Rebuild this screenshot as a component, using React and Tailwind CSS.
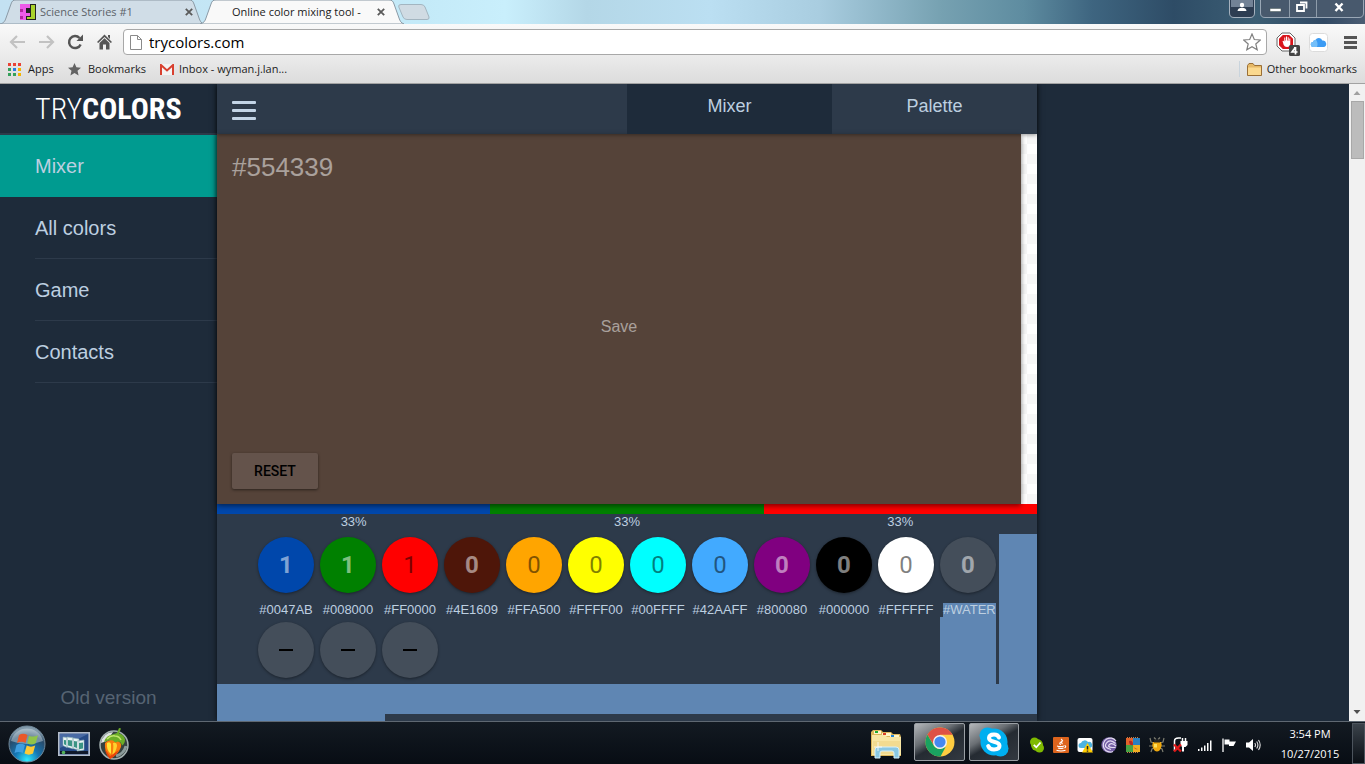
import React, { useState } from 'react';

const colors = [
  { hex: '#0047AB', parts: 1, circle: 'bg-[#0047ab] text-white/50 font-bold' },
  { hex: '#008000', parts: 1, circle: 'bg-[#008000] text-white/50 font-bold' },
  { hex: '#FF0000', parts: 1, circle: 'bg-[#ff0000] text-black/50 font-normal' },
  { hex: '#4E1609', parts: 0, circle: 'bg-[#4e1609] text-white/50 font-bold' },
  { hex: '#FFA500', parts: 0, circle: 'bg-[#ffa500] text-black/50 font-normal' },
  { hex: '#FFFF00', parts: 0, circle: 'bg-[#ffff00] text-black/50 font-normal' },
  { hex: '#00FFFF', parts: 0, circle: 'bg-[#00ffff] text-black/50 font-normal' },
  { hex: '#42AAFF', parts: 0, circle: 'bg-[#42aaff] text-black/50 font-normal' },
  { hex: '#800080', parts: 0, circle: 'bg-[#800080] text-white/50 font-bold' },
  { hex: '#000000', parts: 0, circle: 'bg-black text-white/50 font-bold' },
  { hex: '#FFFFFF', parts: 0, circle: 'bg-white text-black/50 font-normal' },
  { hex: '#WATER', parts: 0, circle: 'bg-[#444e5a] text-white/50 font-bold' },
];

const menu = ['Mixer', 'All colors', 'Game', 'Contacts'];

const CloseX = () => (
  <svg className="w-2 h-2" viewBox="0 0 8 8" stroke="#5a5a5a" strokeWidth="1.8">
    <path d="M.8.8l6.4 6.4M7.2.8L.8 7.2" />
  </svg>
);

const TabShape = ({ fill }) => (
  <svg className="absolute inset-0 w-full h-full" viewBox="0 0 204 24" preserveAspectRatio="none">
    <path d="M0 24C4 23 5 21 6 18L11 4C12 1 13 0 16 0H189C192 0 193 1 194 4L199 18C200 21 201 23 204 24Z" fill={fill} stroke="#8b9aa6" />
  </svg>
);

const TabStrip = () => (
  <div className="relative h-6 shrink-0 flex items-start overflow-hidden bg-[linear-gradient(90deg,#c3e1f2_0%,#c4eaf8_31%,#c9effc_37%,#b4d7e7_43%,#bbdff2_52%,#a9cde0_60%,#76a1b1_69%,#5e8ca0_75%,#3e6580_80%,#2e4c66_86%,#3c5e74_92%,#314964_97%,#4c5d73_100%)]">
    <div className="relative w-[204px] h-6 shrink-0">
      <TabShape fill="#d0dde7" />
      <div className="relative flex items-center h-6 pl-5 pr-[11px] text-[11px] text-[#5c6369]">
        <svg className="w-4 h-4 mr-1" viewBox="0 0 16 16">
          <path fill="#222" d="M0 0h16v16H0z" />
          <path fill="#ee5be8" d="M0 0h10v4H6v5h4v3H6v4H0z" />
          <path fill="#b4249f" d="M0 5h3v3H0zM0 12h3v3H0z" />
          <path fill="#a9d32c" d="M11 1h4v14H7v-2h4z" />
          <path fill="#222" d="M7 5h3v3H7z" />
        </svg>
        <span>Science Stories #1</span>
        <button className="ml-auto" aria-label="Close tab"><CloseX /></button>
      </div>
    </div>
    <div className="relative w-[204px] h-6 -ml-1 shrink-0">
      <TabShape fill="#f9f9f9" />
      <div className="relative flex items-center h-6 pl-8 pr-[19px] text-[11px] text-[#1b1b1b]">
        <span className="whitespace-nowrap">Online color mixing tool -</span>
        <button className="ml-auto" aria-label="Close tab"><CloseX /></button>
      </div>
    </div>
    <button className="-ml-1.5 mt-1" aria-label="New tab">
      <svg className="w-8 h-4" viewBox="0 0 32 16">
        <path d="M3 .5H23Q26 .5 27 3L31 13Q31.500 15.500 29 15.500H9Q6 15.500 5 13L.8 3Q0 .5 3 .5Z" fill="#d0dbe3" stroke="#a3b5c0" />
      </svg>
    </button>
    <div className="ml-auto flex items-start gap-[5px]">
      <button aria-label="Profile">
        <svg className="w-[26px] h-[18px]" viewBox="0 0 26 18">
          <path d="M.5 0V13Q.5 17.500 5 17.500H21Q25.500 17.500 25.500 13V0" fill="#2d3d52" stroke="#a5b1be" />
          <path d="M2 0H24V7H2Z" fill="#8394a7" opacity=".8" />
          <circle cx="13" cy="5" r="2.200" fill="#fff" />
          <path d="M8.500 11Q9 7.700 13 7.700T17.500 11Z" fill="#fff" />
        </svg>
      </button>
      <svg className="w-[104px] h-[18px] mr-px" viewBox="0 0 104 18" role="img" aria-label="Window controls">
        <path d="M.5 0V13Q.5 17.500 5 17.500H99Q103.500 17.500 103.500 13V0" fill="#48596d" stroke="#9aa7b6" />
        <path d="M29.500 0V17M56.500 0V17" stroke="#8e9caa" />
        <path d="M10 8.500h11v3H10z" fill="#fff" stroke="#455" strokeWidth=".5" />
        <path d="M37 5h7v6h-7zM40 2.500h6.500v6" fill="none" stroke="#fff" strokeWidth="1.800" />
        <path d="M75.500 3.500l7 7.500M82.500 3.500l-7 7.500" stroke="#fff" strokeWidth="2.400" />
      </svg>
    </div>
  </div>
);

const Toolbar = () => (
  <div className="h-8 shrink-0 flex items-center pl-[9px] pr-2 pt-1 bg-linear-to-b from-[#f9f9f9] to-[#ebebeb]">
    <div className="flex gap-3">
      <button aria-label="Back">
        <svg className="w-[17px] h-4" viewBox="0 0 17 16" fill="none" stroke="#c2c2c2" strokeWidth="2.200"><path d="M16 8H2.500M8 2L2 8l6 6" /></svg>
      </button>
      <button aria-label="Forward">
        <svg className="w-[17px] h-4" viewBox="0 0 17 16" fill="none" stroke="#c2c2c2" strokeWidth="2.200"><path d="M1 8h13.500M9 2l6 6-6 6" /></svg>
      </button>
      <button aria-label="Reload">
        <svg className="w-[17px] h-4" viewBox="0 0 17 16">
          <path d="M13.600 10.500A6 6 0 1 1 12.500 4" fill="none" stroke="#555" strokeWidth="2.500" />
          <path d="M16 .5V7H9.500Z" fill="#555" />
        </svg>
      </button>
      <button aria-label="Home">
        <svg className="w-[17px] h-4" viewBox="0 0 17 16" fill="#555">
          <path d="M8.500.5L16 8l-1.200 1L8.500 3 2.200 9 1 8z" />
          <path d="M3.500 9l5-4.700 5 4.700v6.500H10v-5H7v5H3.500zM12 1h2v4l-2-2z" />
        </svg>
      </button>
    </div>
    <div className="ml-[10px] flex-1 flex items-center h-[26px] px-[5px] bg-white border border-[#a8a8a8] rounded-sm">
      <svg className="w-3 h-[15px] ml-px mr-[7px]" viewBox="0 0 12 15" fill="#fff" stroke="#8a8a8a">
        <path d="M.5.5h7l4 4v10H.5zM7.500.5v4h4" />
      </svg>
      <input aria-label="Address" className="flex-1 min-w-0 text-[15px] text-black outline-none" defaultValue="trycolors.com" />
      <button aria-label="Bookmark this page">
        <svg className="w-[18px] h-[18px]" viewBox="0 0 18 18" fill="#fff" stroke="#808080" strokeWidth="1.200">
          <path d="M9 1l2.300 5.500 6 .500-4.500 4 1.400 5.800L9 13.700l-5.200 3.100L5.200 11 .700 7l6-.500z" />
        </svg>
      </button>
    </div>
    <button className="ml-[9px]" aria-label="AdBlock">
      <svg className="w-6 h-6 mt-1" viewBox="0 0 24 24">
        <path d="M6 1h8l5 5v8l-5 5H6l-5-5V6z" fill="#fff" stroke="#666" />
        <path d="M6.800 3h6.400L17 6.800v6.400L13.200 17H6.800L3 13.200V6.800z" fill="#d9151b" />
        <path d="M6.500 9l1-.3.800 1V5.500h1v3h.700V4.500h1v4h.700V5.300h1V9h.600V6.500h1V12q0 3-3.300 3-2.500 0-3.300-2z" fill="#fff" />
        <rect x="13" y="13" width="11" height="11" rx="1.500" fill="#444" />
        <path d="M19.300 15.500l-3.300 4.500h5.500M19.500 15v7.500" fill="none" stroke="#fff" strokeWidth="1.700" />
      </svg>
    </button>
    <button className="ml-[9px]" aria-label="iCloud">
      <svg className="w-[19px] h-[19px]" viewBox="0 0 19 19">
        <rect x=".5" y=".5" width="18" height="18" rx="3" fill="#fff" stroke="#dcdcdc" />
        <path d="M4.500 14a2.500 2.500 0 0 1-.500-5A2.800 2.800 0 0 1 6.500 7 3.700 3.700 0 0 1 13.300 7.500 3.200 3.200 0 0 1 14.500 14z" fill="#3b9bf4" />
        <path d="M4.500 14a2.500 2.500 0 0 1-.500-5A2.800 2.800 0 0 1 7 6.800Q9.500 10 8 14z" fill="#74bff9" />
      </svg>
    </button>
    <button className="ml-4" aria-label="Chrome menu">
      <svg className="w-[13px] h-[13px]" viewBox="0 0 13 13" fill="#555"><path d="M0 0h13v3H0zM0 5h13v3H0zM0 10h13v3H0z" /></svg>
    </button>
  </div>
);

const BookmarksBar = () => (
  <nav className="h-7 shrink-0 flex items-center px-2 pb-px border-b border-[#a2a2a2] bg-linear-to-b from-[#ebebeb] to-[#dcdcdc] text-[11px] text-[#1c1c1c] whitespace-nowrap">
    <a href="#apps" className="flex items-center gap-[7px] w-[60px]">
      <svg className="w-[13px] h-[13px]" viewBox="0 0 13 13">
        <path fill="#ea4335" d="M0 0h3v3H0zM5 0h3v3H5zM10 0h3v3h-3z" />
        <path fill="#34a05a" d="M0 5h3v3H0zM0 10h3v3H0z" />
        <path fill="#2a7de1" d="M5 5h3v3H5z" />
        <path fill="#34a05a" d="M5 10h3v3H5z" />
        <path fill="#f4b400" d="M10 5h3v3h-3zM10 10h3v3h-3z" />
      </svg>
      Apps
    </a>
    <a href="#bookmarks" className="flex items-center gap-[7px] w-[92px]">
      <svg className="w-[13px] h-[13px]" viewBox="0 0 13 13" fill="#636363">
        <path d="M6.500 0l1.900 4.300 4.600.400-3.500 3.100 1.100 4.700-4.100-2.500-4.100 2.500 1.100-4.700L0 4.700l4.600-.400z" />
      </svg>
      Bookmarks
    </a>
    <a href="#inbox" className="flex items-center gap-[5px]">
      <svg className="w-[14px] h-[11px]" viewBox="0 0 14 11">
        <path fill="#f3f3f3" d="M1 0h12v11H1z" />
        <path d="M1 11V1l6 5.500L13 1v10" fill="none" stroke="#d8402f" strokeWidth="2" />
      </svg>
      Inbox - wyman.j.lan...
    </a>
    <a href="#other" className="ml-auto flex items-center gap-[5px] pl-[7px] border-l border-[#c9d4dd]">
      <svg className="w-[15px] h-[13px]" viewBox="0 0 15 13">
        <path d="M.5 12.500v-10L2 .5h4L7.500 2.500h7v10z" fill="#e5b867" stroke="#9a6f36" />
        <path d="M1 4.500h13v7.500H1z" fill="#fbd98f" />
      </svg>
      Other bookmarks
    </a>
  </nav>
);

const Sidebar = () => (
  <aside className="w-[217px] shrink-0 flex flex-col text-[#bdcfe0]">
    <div className="h-[51px] shrink-0 flex items-center pl-[35px] border-b-2 border-[#2d3a4a]">
      <h1 className="font-['Roboto_Condensed','Liberation_Sans_Narrow','Roboto',sans-serif] text-[30px] leading-8 text-white">
        <span className="font-light">TRY</span><span className="font-bold">COLORS</span>
      </h1>
    </div>
    <nav className="text-xl">
      {menu.map((item, i) => (
        <a
          key={item}
          href={`#${item}`}
          className={i === 0 ? 'flex items-center h-[62px] pl-[35px] bg-[#009b90]' : 'flex items-center h-[62px] ml-[35px] border-b border-[#2d3a4a]'}
        >
          {item}
        </a>
      ))}
    </nav>
    <a href="#old" className="mt-auto pb-[11px] text-center text-[19px] leading-6 text-[#566473]">Old version</a>
  </aside>
);

const Mixer = () => {
  const [tab, setTab] = useState('Mixer');

  return (
    <main className="relative flex-1 max-w-[820px] flex flex-col bg-[#2d3a4a] text-[#bdcfe0] shadow-[0_0_6px_rgba(0,0,0,0.7)]">
      <header className="relative z-20 h-[50px] shrink-0 flex items-stretch shadow-[0_1px_4px_rgba(0,0,0,0.4)]">
        <div className="w-1/2 flex items-center pl-[15px] pt-[3px]">
          <button aria-label="Menu">
            <svg className="w-6 h-[19px]" viewBox="0 0 24 19" fill="#c3d4e6">
              <rect width="24" height="3" rx="1" /><rect y="8" width="24" height="3" rx="1" /><rect y="16" width="24" height="3" rx="1" />
            </svg>
          </button>
        </div>
        {['Mixer', 'Palette'].map((name) => (
          <button
            key={name}
            onClick={() => setTab(name)}
            className={tab === name ? 'w-1/4 flex justify-center pt-3 text-lg leading-5 bg-[#1e2b3a]' : 'w-1/4 flex justify-center pt-3 text-lg leading-5'}
          >
            {name}
          </button>
        ))}
      </header>

      {/* Mixed color over the transparency checkerboard */}
      <section className="relative h-[370px] shrink-0 pr-4 bg-white bg-[repeating-conic-gradient(#f7f7f7_0_25%,#ffffff_0_50%)] bg-size-[20px_20px]">
        <div className="relative z-10 h-full flex flex-col items-start px-[15px] py-[15px] bg-[#554339] shadow-[0_2px_5px_rgba(0,0,0,0.5)]">
          <h2 className="mb-4 text-[26px] leading-9 text-white/50">#554339</h2>
          <button className="flex-1 self-stretch text-base text-white/50">Save</button>
          <button className="w-[86px] h-9 rounded-xs bg-[#64534b] font-['Roboto',sans-serif] text-sm font-medium text-black shadow-[0_1px_3px_rgba(0,0,0,0.5)]">RESET</button>
        </div>
      </section>

      <div className="h-[30px] shrink-0 grid grid-cols-3 text-center text-[13px] leading-4">
        <div><div className="h-[10px] bg-[#0047ab]" />33%</div>
        <div><div className="h-[10px] bg-[#008000]" />33%</div>
        <div><div className="h-[10px] bg-[#ff0000]" />33%</div>
      </div>

      <div className="h-[150px] shrink-0 flex">
        <ul className="flex gap-[6px] pl-[41px] pt-[3px] mr-[3px]">
          {colors.map((c) => (
            <li key={c.hex} className="w-14 flex flex-col">
              <button className={`w-14 h-14 shrink-0 rounded-full font-['Roboto',sans-serif] text-2xl shadow-[0_1px_3px_rgba(0,0,0,0.4)] ${c.circle}`}>
                {c.parts}
              </button>
              <span className={c.hex === '#WATER' ? 'mt-[10px] ml-[3px] text-[13px] leading-[14px] bg-[#5f86b3]' : 'mt-[10px] text-center text-[13px] leading-[14px]'}>
                {c.hex}
              </span>
              {c.parts > 0 && (
                <button aria-label={`Remove ${c.hex}`} className="mt-[5px] w-14 h-14 shrink-0 flex items-center justify-center rounded-full bg-[#444e5a] shadow-[0_1px_3px_rgba(0,0,0,0.4)]">
                  <span className="w-[14px] h-0.5 bg-black" />
                </button>
              )}
              {c.hex === '#WATER' && <div className="flex-1 bg-[#5f86b3]" />}
            </li>
          ))}
        </ul>
        <div className="flex-1 bg-[#5f86b3]" />
      </div>
      <div className="h-[30px] shrink-0 bg-[#5f86b3]" />
      <div className="flex-1 w-[168px] bg-[#5f86b3]" />
    </main>
  );
};

const Scrollbar = () => (
  <div className="w-4 shrink-0 ml-auto flex flex-col items-center bg-[#f1f1f1]">
    <svg className="w-4 h-[17px]" viewBox="0 0 16 17" fill="#a0a0a0"><path d="M4.500 11L8 7l3.500 4z" /></svg>
    <div className="w-[13px] h-[58px] bg-[#bcbcbc] border border-[#a8a8a8]" />
    <svg className="w-4 h-[17px] mt-auto" viewBox="0 0 16 17" fill="#505050"><path d="M4.500 6L8 10l3.500-4z" /></svg>
  </div>
);

const trayIcons = [
  { name: 'Skype status', art: <><circle cx="5.500" cy="5" r="4.500" fill="#7fba00" /><circle cx="8" cy="8" r="6" fill="#7fba00" /><circle cx="10.500" cy="11" r="4.500" fill="#7fba00" /><path d="M4.800 7.800l2.500 2.500L11.500 5.500" fill="none" stroke="#fff" strokeWidth="1.800" /></> },
  { name: 'Java', art: <><rect width="16" height="16" rx="1" fill="#dd641d" /><path d="M8 2q2.500 1.500 0 3t0 2.500M10 3.500Q7.500 5 9.500 7M4 9q3.500 1.200 7 0M5 11q3 1 5.500 0M3.500 13.200q4.500 1.500 9 0M11.500 8.500q2.500.500 0 2.500" fill="none" stroke="#fff" strokeWidth="1.100" /></> },
  { name: 'iCloud', art: <><rect x=".5" y="1" width="15" height="14" rx="2" fill="#fff" /><path d="M4 11a2.500 2.500 0 0 1 0-5 4 4 0 0 1 7-1 3 3 0 0 1 2 6z" fill="#4db3e0" /><path d="M10.500 6L16 15.500H5z" fill="#fc0" /><path d="M10.500 9v3.500M10.500 13.500v1.200" stroke="#222" strokeWidth="1.500" /></> },
  { name: 'BitTorrent', art: <><circle cx="8" cy="8" r="7.700" fill="#7560a5" /><path d="M15 4A7 7 0 1 0 12 14.500M14.500 6.500Q9 1.500 5.500 6T10 12.500M15 9Q11 5 8.500 7.500T11 10.500H14.500" fill="none" stroke="#e4dcf2" strokeWidth="1.200" /></> },
  { name: 'AVG', art: <><path d="M1 1h7v7H1z" fill="#e3622a" /><path d="M8 1h7v7H8z" fill="#2a7fc0" /><path d="M1 8h7v7H1z" fill="#48a343" /><path d="M8 8h7v7H8z" fill="#f0ad22" /><path d="M4 4q4-1 4 4 1 4 5 4-4 1-5-4-4 1-4-4z" fill="#b52723" /><path d="M2 .5h12M2 15.500h12" stroke="#c57e44" strokeDasharray="1 1" /></> },
  { name: 'Bug', art: <><path d="M1 1l1 4 3 1M15 1l-1 4-3 1M0 9h16M2 15l1-3 2-1M14 15l-1-3-2-1M5 .5l2 2M11 .5l-2 2" fill="none" stroke="#7d7d70" strokeWidth="1.200" /><path d="M4 5h8q1.500 3 0 6-1.500 3.500-4 3.500T4 11Q2.500 8 4 5z" fill="#f0a90e" /><path d="M5 2.500h6v3H5z" fill="#252525" /><path d="M5 7h3v3.500H5z" fill="#ffe05a" /></> },
  { name: 'Power', art: <><path d="M1.500 7V4q0-3 4-3H8M1.500 7v7M9.500 1v3M12.500 1v3" fill="none" stroke="#fff" strokeWidth="1.500" /><path d="M7.500 4h7v4l-2 2h-1.500v4.500H9V10L7.500 8z" fill="#fff" /><path d="M1 7.500l7 7M8 7.500l-7 7" stroke="#e01919" strokeWidth="2.300" /></> },
  { name: 'Network', art: <path d="M1 12h1.500v2H1zM4 10.500h1.500V14H4zM7 8.500h1.500V14H7zM10 6h1.500v8H10zM13 3.500h1.500V14H13z" fill="#fff" /> },
  { name: 'Action center', art: <><path d="M2 1.500V15" stroke="#fff" strokeWidth="1.300" /><path d="M3.500 2.500h5v2H15L12.500 9H8V7.500H3.500z" fill="#fff" /></> },
  { name: 'Volume', art: <><path d="M1 5.500h3L8 2v12l-4-3.500H1z" fill="#fff" /><path d="M9.800 6q1.400 2 0 4M11.700 4.500q2.400 3.500 0 7M13.500 3q3.400 5 0 10" fill="none" stroke="#dedede" strokeWidth="1.100" /></> },
];

const Taskbar = () => (
  <footer className="h-[43px] shrink-0 flex items-center pl-2 pt-px border-t border-[#5f6872] bg-linear-to-b from-[#131a22] to-[#080d14] text-white">
    <button aria-label="Start">
      <svg className="w-[38px] h-[38px]" viewBox="0 0 38 38">
        <defs>
          <radialGradient id="orb" cx=".5" cy=".95" r=".85">
            <stop offset="0" stopColor="#2cecff" /><stop offset=".4" stopColor="#1577b5" /><stop offset=".8" stopColor="#294a69" /><stop offset="1" stopColor="#8199aa" />
          </radialGradient>
        </defs>
        <circle cx="19" cy="19" r="18" fill="url(#orb)" stroke="#71899a" />
        <path d="M3 16A16.500 16.500 0 0 1 35 16Q19 22 3 16z" fill="#d5e2e9" opacity=".45" />
        <path d="M11 10q4-2.500 8.500 0l-2 8q-4-2.500-8.500 0z" fill="#ea582a" />
        <path d="M21 10.700q4.500 2 9-.500l-2.300 8q-4.200 2.500-8.500 0z" fill="#90c44a" />
        <path d="M8.500 20q4-2.500 8.500 0l-2.200 8q-4-2.200-8.300 0z" fill="#3f9ee0" />
        <path d="M18.700 20.500q4.300 2.300 8.500 0l-2.200 8q-4 2.300-8.500 0z" fill="#fcca36" />
      </svg>
    </button>
    <button className="ml-3" aria-label="Switch windows">
      <svg className="w-8 h-6" viewBox="0 0 32 24">
        <rect x=".8" y=".8" width="30.400" height="22.400" fill="#264a87" stroke="#b4bdcb" strokeWidth="1.600" />
        <path d="M2 2h28L2 16z" fill="#6080b8" opacity=".6" />
        <path d="M2 19h28v3H2z" fill="#10192b" />
        <path d="M5 5l4 .5v10l-4-2zM9 5l6 .8v11L9 15zM15 6l6 1v11l-6-1.500zM19 9l7-1v10l-7 1z" fill="#e8f3f4" stroke="#8cb0b5" strokeWidth=".6" />
        <path d="M6 8l2 .3v5l-2-1zM10 8l4 .5v6l-4-1zM16 9l3 .5v6.500l-3-1zM21 11l4-.5v6l-4 .8z" fill="#3a9484" />
        <circle cx="5.500" cy="20.500" r="1.800" fill="#53b35b" />
      </svg>
    </button>
    <button className="ml-2" aria-label="FL Studio">
      <svg className="w-8 h-8" viewBox="0 0 32 32">
        <circle cx="16" cy="17" r="14" fill="#35413f" stroke="#a4b0b0" strokeWidth="1.500" />
        <path d="M3 15Q5 5 15 4L9 13z" fill="#f2f5f5" opacity=".9" />
        <path d="M18 28q8-2 10-10" fill="none" stroke="#8b9a9a" strokeWidth="3" />
        <path d="M7 15Q13 9 20 13q4 2 3 6-3 8-11 12Q6 24 7 15z" fill="#fa7d0c" />
        <path d="M9 15q3-2 4 1l0 10Q8 22 9 15z" fill="#ffe63a" />
        <path d="M15 15q4-1 4 3-1 6-5 10 2-8 1-13z" fill="#ffd22d" />
        <path d="M12 31Q8 27 7 21l5 7 9-6q-3 6-9 9z" fill="#e2340b" opacity=".8" />
        <path d="M6 14q2-7 10-8l3-1 2-5 2 .600-2 5q5 1 6 6 0 4-3 6-1-4-4-4-3 2-5-1-4-1-9 1.400z" fill="#6bad27" />
        <path d="M9 11q4-4 8-3 4 0 6 4" fill="none" stroke="#c0e56c" strokeWidth="1.500" />
      </svg>
    </button>

    <button className="ml-auto" aria-label="Explorer">
      <svg className="w-8 h-[30px]" viewBox="0 0 32 30">
        <path d="M1 3L3 1h8l2 2h8l2 2h7l1 3v19H1z" fill="#dcb65b" />
        <path d="M4 2h7v3H4z" fill="#fff5c7" /><path d="M5 2h3v2H5z" fill="#1eaa32" />
        <path d="M12 4h9v3h-9z" fill="#fff5c7" /><path d="M13 4h3v2h-3z" fill="#d93d27" />
        <path d="M20 6h9v3h-9z" fill="#fff5c7" /><path d="M21 6h3v2h-3z" fill="#2184d7" />
        <path d="M2 6h13l2 2h14v18H2z" fill="#f8e6a3" /><path d="M3 12h27v13H3z" fill="#eed384" opacity=".6" />
        <path d="M5 29V21q0-3 3-3h18q3 0 3 3v8h-5v-5q0-2-2-2H12q-2 0-2 2v5z" fill="#8ac8e3" stroke="#d6f0fb" />
        <path d="M8 13v9M4 18h8" stroke="#fff" opacity=".8" />
      </svg>
    </button>
    <div className="self-start flex gap-1 ml-3">
      <button aria-label="Chrome" className="w-[51px] h-[38px] flex items-center justify-center rounded-xs border border-[#9a9fa4] bg-[linear-gradient(150deg,#b4b7ba_0%,#6a6f74_35%,#252b32_52%,#333941_100%)]">
        <svg className="w-[30px] h-[30px]" viewBox="0 0 30 30">
          <circle cx="15" cy="15" r="14.500" fill="#ffcd41" />
          <path d="M2.400 7.800A14.500 14.500 0 0 1 27.600 7.800H15L9 18.500z" fill="#de5145" />
          <path d="M2.400 7.800L8.800 18.600Q11 22 15 22L20.600 20 15.500 29.500A14.500 14.500 0 0 1 2.400 7.800z" fill="#1aa260" />
          <circle cx="15" cy="15" r="7" fill="#f3f3f3" />
          <circle cx="15" cy="15" r="5.600" fill="#4688f1" />
        </svg>
      </button>
      <button aria-label="Skype" className="w-[50px] h-[38px] flex items-center justify-center rounded-xs border border-[#9a9fa4] bg-[linear-gradient(150deg,#b4b7ba_0%,#6a6f74_35%,#252b32_52%,#333941_100%)]">
        <svg className="w-[30px] h-[30px]" viewBox="0 0 30 30">
          <circle cx="15" cy="15" r="13.500" fill="#00aff0" /><circle cx="8.500" cy="8.500" r="8" fill="#00aff0" /><circle cx="21.500" cy="21.500" r="8" fill="#00aff0" />
          <path d="M20 10.500Q19 7.500 15 7.500q-5 0-5 3.600 0 2.700 5 3.700 5.500 1.100 5.500 4 0 3.700-5.500 3.700-4.500 0-5.800-3.500" fill="none" stroke="#fff" strokeWidth="4" strokeLinecap="round" />
        </svg>
      </button>
    </div>
    <div className="flex gap-2 ml-[10px] mt-[3px]">
      {trayIcons.map((icon) => (
        <svg key={icon.name} className="w-4 h-4" viewBox="0 0 16 16" role="img" aria-label={icon.name}>{icon.art}</svg>
      ))}
    </div>
    <div className="w-[84px] ml-[7px] text-center text-[11px] leading-5">
      <div>3:54 PM</div>
      <div>10/27/2015</div>
    </div>
    <button aria-label="Show desktop" className="self-stretch w-[13px] border border-[#4c545d] bg-linear-to-b from-[#3b434b] to-[#0b1016]" />
  </footer>
);

const App = () => {
  return (
    <div className="h-screen flex flex-col overflow-hidden font-['Open_Sans',sans-serif]">
      <TabStrip />
      <Toolbar />
      <BookmarksBar />
      <div className="flex-1 min-h-0 flex overflow-hidden bg-[#1e2b3a] font-['Liberation_Sans',sans-serif]">
        <Sidebar />
        <Mixer />
        <Scrollbar />
      </div>
      <Taskbar />
    </div>
  );
};

export default App;
